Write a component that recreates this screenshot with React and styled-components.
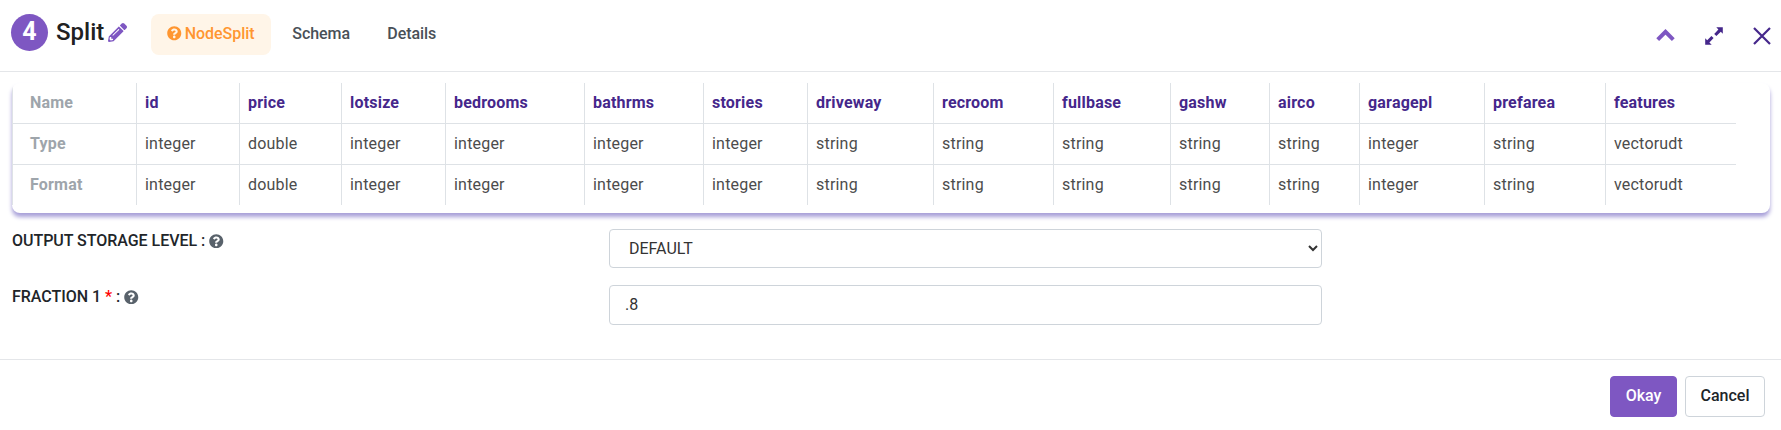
import React from "react";
import styled, { createGlobalStyle } from "styled-components";
import { FaQuestionCircle, FaPencilAlt } from "react-icons/fa";

const GlobalStyle = createGlobalStyle`
  * { box-sizing: border-box; }
  body { margin: 0; background: #fff; font-family: Roboto, sans-serif; font-size: 16px; line-height: 24px; color: #212529; }
`;

const Dialog = styled.div`
  height: 430px;
  display: flex;
  flex-direction: column;
  overflow: hidden;
`;

const Header = styled.header`
  height: 72px;
  flex: none;
  display: flex;
  align-items: flex-start;
  padding: 14px 10px 0 11px;
  border-bottom: 1px solid #e4e6e9;
`;

const StepBadge = styled.span`
  width: 37px;
  height: 37px;
  border-radius: 50%;
  background: #7e57c2;
  color: #fff;
  font-size: 25px;
  font-weight: 700;
  line-height: 36px;
  text-align: center;
`;

const Title = styled.h1`
  margin: 0 0 0 8px;
  font-size: 24px;
  font-weight: 500;
  line-height: 36px;
  color: #212121;
`;

const EditButton = styled.span`
  display: flex;
  margin: 9px 0 0 4px;
  color: #7e57c2;
`;

const Tabs = styled.nav`
  display: flex;
  margin-left: 24px;
`;

const Tab = styled.span`
  display: flex;
  align-items: center;
  gap: 3px;
  height: 41px;
  width: ${(p) => p.$width}px;
  padding: 0 0 2px ${(p) => (p.$active ? "16px" : "21px")};
  border-radius: 8px;
  font-weight: 500;
  letter-spacing: -0.05px;
  color: ${(p) => (p.$active ? "#ff9631" : "#495057")};
  background: ${(p) => (p.$active ? "#fff5e8" : "transparent")};
`;

const WindowActions = styled.div`
  display: flex;
  align-items: center;
  gap: 30px;
  height: 44px;
  margin-left: auto;
`;

const SchemaCard = styled.section`
  flex: none;
  height: 130px;
  margin: 11px 11px 0 12px;
  border-radius: 8px;
  overflow: hidden;
  box-shadow: 0 4px 4px #a8a0d9;
`;

const SchemaTable = styled.table`
  width: 1724px;
  table-layout: fixed;
  border-collapse: separate;
  border-spacing: 0;
  border-left: 1px solid #dee2e6;
  letter-spacing: 0.2px;
`;

const Cell = styled.td`
  height: ${(p) => (p.$last ? "40px" : "41px")};
  padding: 0 0 0 ${(p) => (p.$label ? "17px" : "8px")};
  text-align: left;
  font-weight: ${(p) => (p.$label || p.$name ? 700 : 400)};
  color: ${(p) => (p.$label ? "#9ea5ab" : p.$name ? "#45278b" : "#4c4c4c")};
  border-right: ${(p) => (p.$end ? "none" : "1px solid #dee2e6")};
  border-bottom: ${(p) => (p.$last ? "none" : "1px solid #dee2e6")};
`;

const Form = styled.form`
  display: grid;
  grid-template-columns: 597px 713px;
  align-items: start;
  row-gap: 17px;
  padding: 16px 0 0 12px;
`;

const Label = styled.label`
  display: flex;
  align-items: center;
  font-weight: 500;
  letter-spacing: -0.03px;
  white-space: pre;
  svg { color: #59626b; margin-left: 4px; }
`;

const Required = styled.span`
  color: #f00;
`;

const control = `
  width: 100%;
  border: 1px solid #ced4da;
  border-radius: 4px;
  background: #fff;
  font: 400 16px Roboto, sans-serif;
  color: #333;
`;

const Select = styled.select`
  ${control}
  height: 39px;
  padding: 0 1px 0 15px;
`;

const Input = styled.input`
  ${control}
  height: 40px;
  padding: 0 15px 1px;
`;

const Footer = styled.footer`
  display: flex;
  justify-content: flex-end;
  gap: 8px;
  height: 71px;
  margin-top: auto;
  padding: 16px 16px 0 0;
  border-top: 1px solid #e4e6e9;
`;

const Button = styled.button`
  height: 41px;
  width: ${(p) => (p.$primary ? "67px" : "80px")};
  padding: 0 0 2px;
  border: 1px solid ${(p) => (p.$primary ? "#7e57c2" : "#ced4da")};
  border-radius: 4px;
  background: ${(p) => (p.$primary ? "#7e57c2" : "#fff")};
  color: ${(p) => (p.$primary ? "#fff" : "#212529")};
  font: 500 16px Roboto, sans-serif;
`;

const columns = [
  ["id", "integer", 103], ["price", "double", 102], ["lotsize", "integer", 104],
  ["bedrooms", "integer", 139], ["bathrms", "integer", 119], ["stories", "integer", 104],
  ["driveway", "string", 126], ["recroom", "string", 120], ["fullbase", "string", 117],
  ["gashw", "string", 99], ["airco", "string", 90], ["garagepl", "integer", 125],
  ["prefarea", "string", 121], ["features", "vectorudt", 130],
];

const rows = ["Name", "Type", "Format"];

function ChevronUp() {
  return (
    <svg width="19" height="15" viewBox="0 0 19 15">
      <path d="M1.7 10.6 9.5 2.8 17.3 10.6" fill="none" stroke="#7e57c2" strokeWidth="4" />
    </svg>
  );
}

function Expand() {
  return (
    <svg width="18" height="18" viewBox="0 0 18 18" fill="#45278b">
      <path d="M11.3 0.2h6.5v6.5l-2-2-4.4 4.4-2.2-2.2 4.2-4.5zM0.2 17.8v-6.5l2 2 4.2-4.4 2.2 2.2-4.2 4.4 2.3 2.3z" />
    </svg>
  );
}

function Close() {
  return (
    <svg width="18" height="18" viewBox="0 0 18 18">
      <path d="M1 1 17 17M17 1 1 17" stroke="#45278b" strokeWidth="2.2" />
    </svg>
  );
}

export default function App() {
  return (
    <Dialog>
      <GlobalStyle />
      <Header>
        <StepBadge>4</StepBadge>
        <Title>Split</Title>
        <EditButton><FaPencilAlt size={19} /></EditButton>
        <Tabs>
          <Tab $active $width={120}><FaQuestionCircle size={14.5} />NodeSplit</Tab>
          <Tab $width={95}>Schema</Tab>
          <Tab $width={95}>Details</Tab>
        </Tabs>
        <WindowActions><ChevronUp /><Expand /><Close /></WindowActions>
      </Header>
      <SchemaCard>
        <SchemaTable>
          <colgroup>
            <col style={{ width: 124 }} />
            {columns.map(([name, , width]) => <col key={name} style={{ width }} />)}
          </colgroup>
          <tbody>
            {rows.map((row, r) => (
              <tr key={row}>
                <Cell as="th" $label $last={r === 2}>{row}</Cell>
                {columns.map(([name, type], c) => (
                  <Cell key={name} $name={r === 0} $last={r === 2} $end={c === columns.length - 1}>
                    {r === 0 ? name : type}
                  </Cell>
                ))}
              </tr>
            ))}
          </tbody>
        </SchemaTable>
      </SchemaCard>
      <Form>
        <Label>OUTPUT STORAGE LEVEL :<FaQuestionCircle size={14.5} /></Label>
        <Select defaultValue="DEFAULT"><option>DEFAULT</option></Select>
        <Label>FRACTION 1 <Required>*</Required> :<FaQuestionCircle size={14.5} /></Label>
        <Input defaultValue=".8" />
      </Form>
      <Footer>
        <Button $primary>Okay</Button>
        <Button>Cancel</Button>
      </Footer>
    </Dialog>
  );
}
